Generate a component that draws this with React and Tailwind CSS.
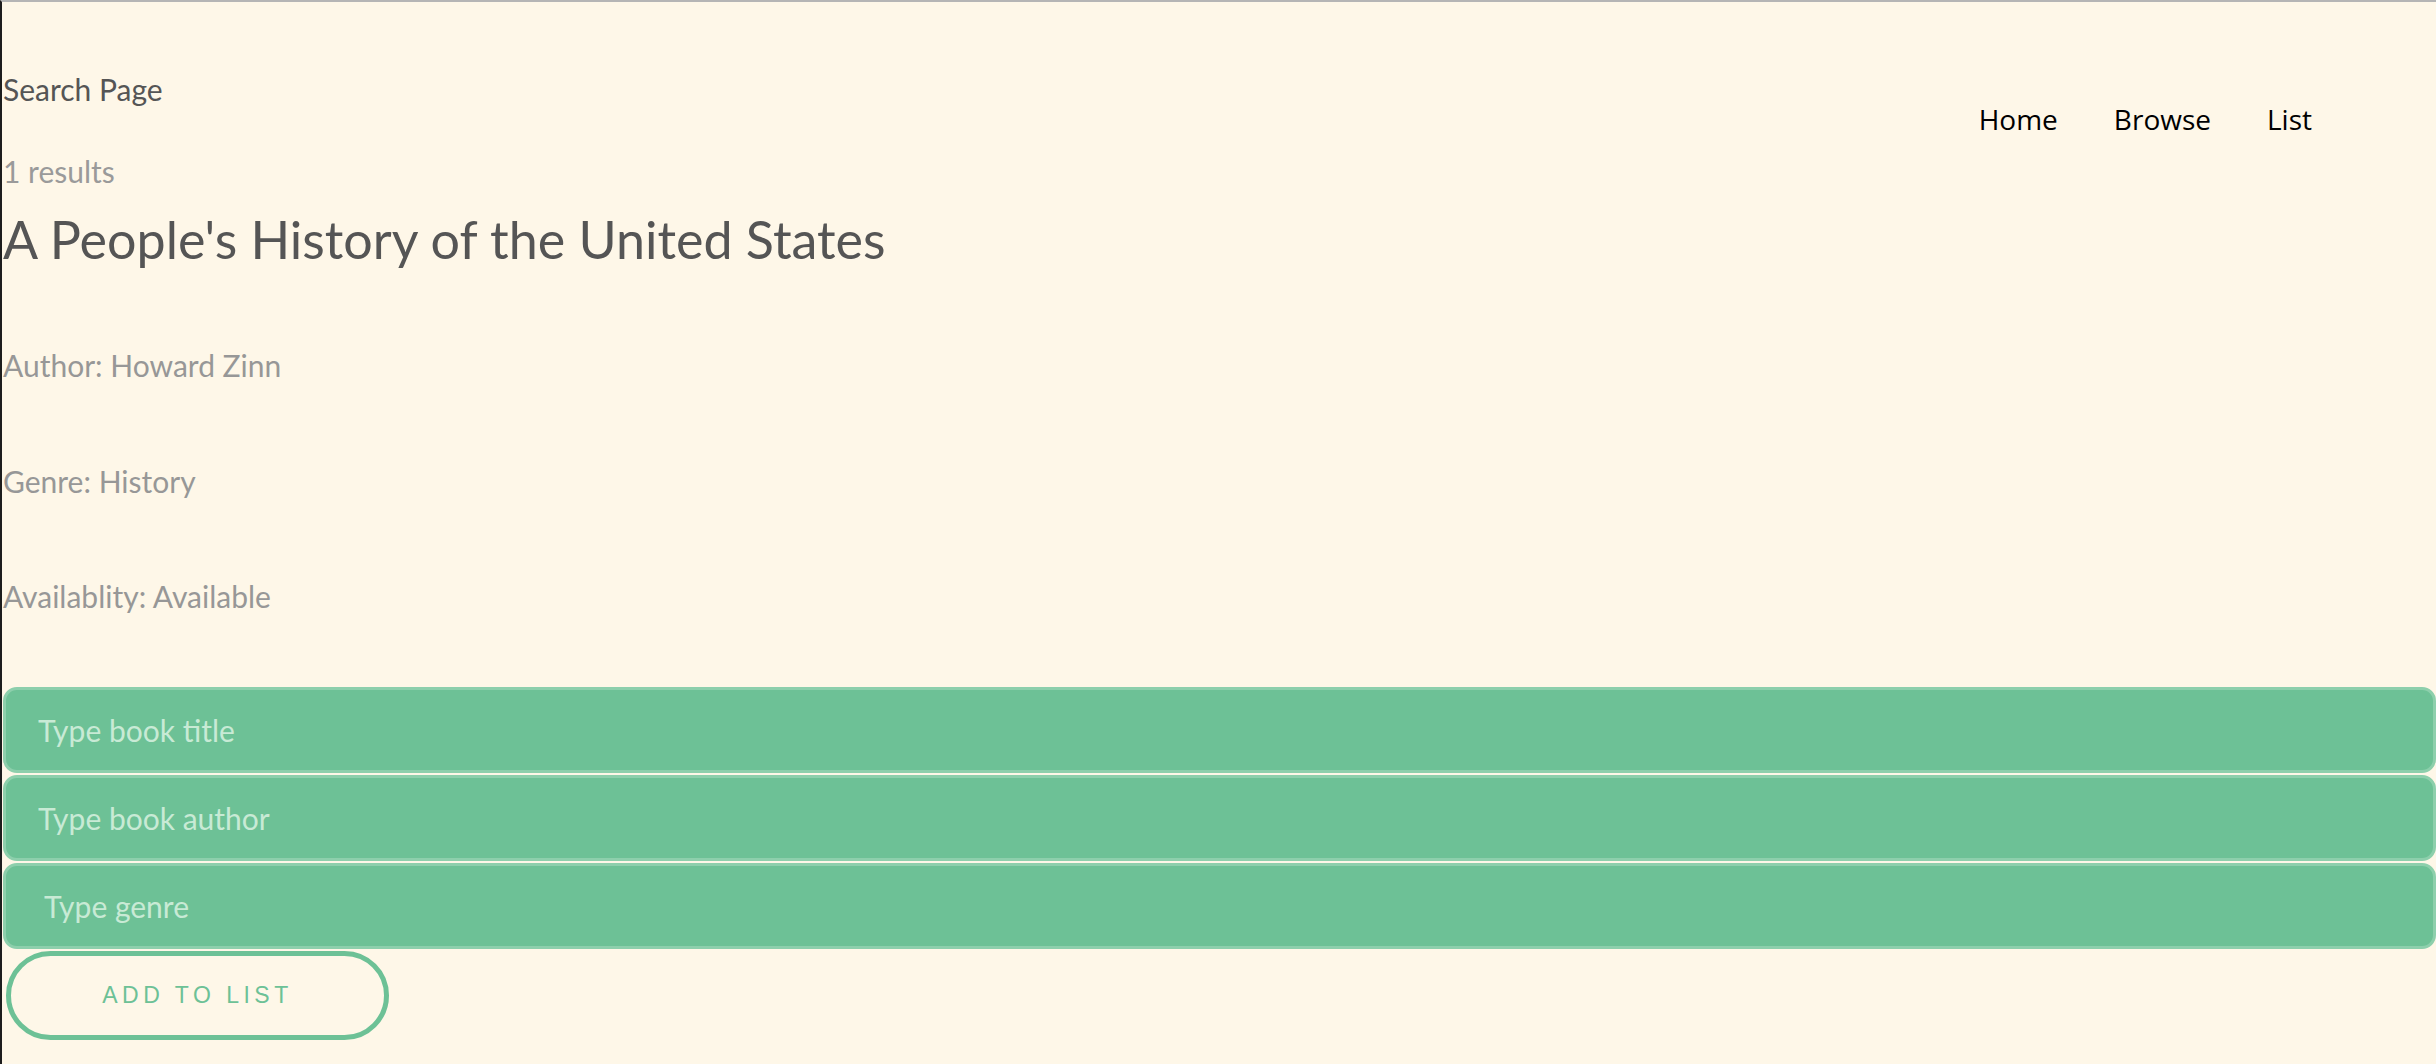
import React, { useState } from "react";

function BookResult({ book }) {
    return (
        <div>
            <h1 className="text-[52px] leading-[64px] text-[#555555] mt-[18px]">{book.title}</h1>
            <p className="text-[30px] leading-[38px] text-[#979797] mt-[75px]">Author: {book.author}</p>
            <p className="text-[30px] leading-[38px] text-[#979797] mt-[78px]">Genre: {book.genre}</p>
            <p className="text-[30px] leading-[38px] text-[#979797] mt-[77px]">Availablity: {book.availability}</p>
        </div>
    );
}

function App() {
    const [title, setTitle] = useState("");
    const [author, setAuthor] = useState("");
    const [genre, setGenre] = useState("");

    const results = [
        {
            title: "A People's History of the United States",
            author: "Howard Zinn",
            genre: "History",
            availability: "Available",
        },
    ];

    const handleAdd = (e) => {
        e.preventDefault();
    };

    return (
        <div className="min-h-screen bg-[#fef7e8] border-t-2 border-l-2 border-t-[#b5b5b5] border-l-[#1d1d1d] font-['Lato',sans-serif]">
            <main className="pl-[1px]">
                <div className="flex justify-between items-start">
                    <div>
                        <h2 className="text-[30px] leading-[36px] text-[#555555] mt-[69px]">Search Page</h2>
                        <p className="text-[30px] leading-[36px] text-[#9a9a9a] mt-[46px]">{results.length} results</p>
                        {results.map((book) => (
                            <BookResult key={book.title} book={book} />
                        ))}
                    </div>
                    <nav className="flex gap-[56px] mt-[99px] mr-[124px] font-['Open_Sans',sans-serif] text-[28px] leading-[36px] text-black">
                        <a href="#">Home</a>
                        <a href="#">Browse</a>
                        <a href="#">List</a>
                    </nav>
                </div>
                <form onSubmit={handleAdd} className="mt-[72px] flex flex-col gap-[2px]">
                    <input
                        type="text"
                        placeholder="Type book title"
                        value={title}
                        onChange={(e) => setTitle(e.target.value)}
                        className="h-[86px] w-full rounded-[14px] border-[3px] border-[#8dcfac] bg-[#6dc196] pl-[32px] text-[30px] text-white outline-none placeholder:text-[#c8ead5]"
                    />
                    <input
                        type="text"
                        placeholder="Type book author"
                        value={author}
                        onChange={(e) => setAuthor(e.target.value)}
                        className="h-[86px] w-full rounded-[14px] border-[3px] border-[#8dcfac] bg-[#6dc196] pl-[32px] text-[30px] text-white outline-none placeholder:text-[#c8ead5]"
                    />
                    <input
                        type="text"
                        placeholder="Type genre"
                        value={genre}
                        onChange={(e) => setGenre(e.target.value)}
                        className="h-[86px] w-full rounded-[14px] border-[3px] border-[#8dcfac] bg-[#6dc196] pl-[38px] text-[30px] text-white outline-none placeholder:text-[#c8ead5]"
                    />
                    <div>
                        <button
                            type="submit"
                            className="ml-[3px] h-[89px] w-[383px] rounded-full border-[5px] border-[#6dc196] bg-transparent font-['Liberation_Sans',sans-serif] text-[23px] tracking-[4.5px] text-[#6dc196]"
                        >
                            ADD TO LIST
                        </button>
                    </div>
                </form>
            </main>
        </div>
    );
}

export default App;
